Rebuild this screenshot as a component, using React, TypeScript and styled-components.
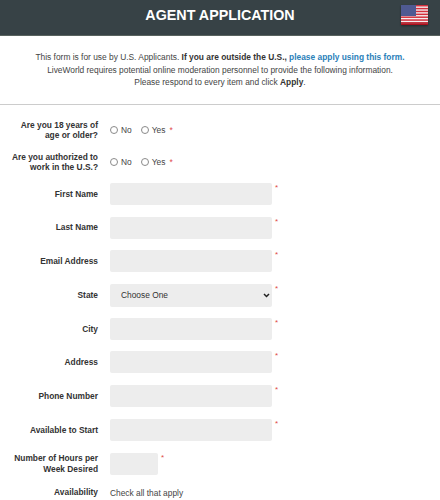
import { createGlobalStyle, styled } from "styled-components";

const textFields = ["First Name", "Last Name", "Email Address"];
const lowerFields = ["City", "Address", "Phone Number", "Available to Start"];

const FlagIcon = () => {
  const stripes = [0, 1, 2, 3, 4, 5, 6];
  return (
    <svg width="27" height="20" viewBox="0 0 27 20">
      <rect width="27" height="20" fill="#f4f0f2" />
      {stripes.map((i) => (
        <rect key={i} y={i * 2.86} width="27" height="1.5" fill={i === 6 ? "#b5121f" : "#d3303c"} />
      ))}
      <rect y="18.4" width="27" height="1.6" fill="#a80f1c" />
      <rect width="15" height="11" fill="#4f5a92" />
    </svg>
  );
};

const App = () => {
  return (
    <Page>
      <GlobalStyle />
      {/* header */}
      <Header>
        <Title>AGENT APPLICATION</Title>
        <Flag>
          <FlagIcon />
        </Flag>
      </Header>
      {/* intro */}
      <Intro>
        This form is for use by U.S. Applicants. <b>If you are outside the U.S.,</b>{" "}
        <IntroLink href="#">please apply using this form.</IntroLink>
        <br />
        LiveWorld requires potential online moderation personnel to provide the following information.
        <br />
        Please respond to every item and click <b>Apply</b>.
      </Intro>
      <Form>
        <RadioRow>
          <Label>Are you 18 years of age or older?</Label>
          <RadioGroup>
            <RadioLabel><Radio type="radio" name="age" />No</RadioLabel>
            <RadioLabel><Radio type="radio" name="age" />Yes</RadioLabel>
            <InlineStar>*</InlineStar>
          </RadioGroup>
        </RadioRow>
        <RadioRow>
          <Label>Are you authorized to work in the U.S.?</Label>
          <RadioGroup>
            <RadioLabel><Radio type="radio" name="auth" />No</RadioLabel>
            <RadioLabel><Radio type="radio" name="auth" />Yes</RadioLabel>
            <InlineStar>*</InlineStar>
          </RadioGroup>
        </RadioRow>
        <Fields>
          {textFields.map((name) => (
            <Row key={name}>
              <Label>{name}</Label>
              <Input type="text" />
              <Star>*</Star>
            </Row>
          ))}
          <Row>
            <Label>State</Label>
            <SelectWrap>
              <Select defaultValue="">
                <option value="">Choose One</option>
              </Select>
              <Chevron width="7" height="5" viewBox="0 0 7 5">
                <path d="M1 1 L3.5 3.5 L6 1" fill="none" stroke="#222" strokeWidth="1.5" />
              </Chevron>
            </SelectWrap>
            <Star>*</Star>
          </Row>
          {lowerFields.map((name) => (
            <Row key={name}>
              <Label>{name}</Label>
              <Input type="text" />
              <Star>*</Star>
            </Row>
          ))}
          <Row>
            <Label>Number of Hours per Week Desired</Label>
            <Input type="text" $short />
            <Star>*</Star>
          </Row>
        </Fields>
        <AvailabilityRow>
          <Label>Availability</Label>
          <Hint>Check all that apply</Hint>
        </AvailabilityRow>
      </Form>
    </Page>
  );
};

export default App;

const GlobalStyle = createGlobalStyle`
  html, body {
    margin: 0;
    padding: 0;
    background: #fff;
    overflow: hidden;
  }
`;

const Page = styled.div`
  width: 440px;
  height: 500px;
  overflow: hidden;
  font-family: "Liberation Sans", Arial, sans-serif;
  color: #333;
`;

const Header = styled.header`
  position: relative;
  height: 36px;
  padding-bottom: 6px;
  box-sizing: border-box;
  background: #374246;
  border-bottom: 1px solid #59635f;
  display: flex;
  align-items: center;
  justify-content: center;
`;

const Title = styled.h1`
  margin: 0;
  color: #fff;
  font-size: 14.3px;
  font-weight: 700;
`;

const Flag = styled.div`
  position: absolute;
  top: 5px;
  right: 12px;
  height: 20px;
  line-height: 0;
  box-shadow: 0 1px 2px rgba(0, 0, 0, 0.4);
`;

const Intro = styled.p`
  margin: 0;
  height: 69px;
  padding-top: 15px;
  box-sizing: border-box;
  border-bottom: 1px solid #ccc;
  text-align: center;
  font-size: 8.4px;
  line-height: 12.7px;
  color: #444;

  b {
    color: #333;
  }
`;

const IntroLink = styled.a`
  color: #2a80b9;
  font-weight: 700;
  text-decoration: none;
`;

const Form = styled.form`
  padding-top: 14px;
`;

const Row = styled.div`
  display: flex;
  align-items: center;
  gap: 12px;
  height: 22px;
`;

const RadioRow = styled(Row)`
  height: 22px;
  margin-bottom: 10px;
`;

const Fields = styled.div`
  display: flex;
  flex-direction: column;
  gap: 11.7px;
`;

const Label = styled.label`
  width: 98px;
  padding-left: 8px;
  box-sizing: border-box;
  flex-shrink: 0;
  text-align: right;
  font-size: 8.4px;
  line-height: 10.5px;
  font-weight: 700;
  color: #333;
`;

const RadioGroup = styled.div`
  display: flex;
  align-items: center;
  gap: 9px;
  font-size: 8.4px;
  color: #444;
`;

const RadioLabel = styled.label`
  display: flex;
  align-items: center;
  gap: 3px;
`;

const Radio = styled.input`
  margin: 0;
  width: 8px;
  height: 8px;
  appearance: none;
  border: 1px solid #8a8a8a;
  border-radius: 50%;
  box-sizing: border-box;
`;

const InlineStar = styled.span`
  color: #e04848;
  margin-left: -5px;
`;

const Input = styled.input<{ $short?: boolean }>`
  width: ${(p) => (p.$short ? "48px" : "162px")};
  height: 22px;
  box-sizing: border-box;
  border: none;
  border-radius: 2px;
  background: #ededed;
`;

const SelectWrap = styled.div`
  position: relative;
  width: 162px;
  height: 23px;
  flex-shrink: 0;
`;

const Select = styled.select`
  width: 100%;
  height: 100%;
  box-sizing: border-box;
  padding-left: 11px;
  border: none;
  border-radius: 2px;
  background: #ededed;
  appearance: none;
  font-family: "Liberation Sans", Arial, sans-serif;
  font-size: 8.4px;
  color: #333;
`;

const Chevron = styled.svg`
  position: absolute;
  top: 9px;
  right: 2px;
  pointer-events: none;
`;

const Star = styled.span`
  align-self: flex-start;
  margin-left: -9px;
  color: #e04848;
  font-size: 8px;
  line-height: 10px;
`;

const AvailabilityRow = styled(Row)`
  margin-top: 6px;
  height: 24px;
`;

const Hint = styled.span`
  font-size: 8.4px;
  color: #444;
`;
